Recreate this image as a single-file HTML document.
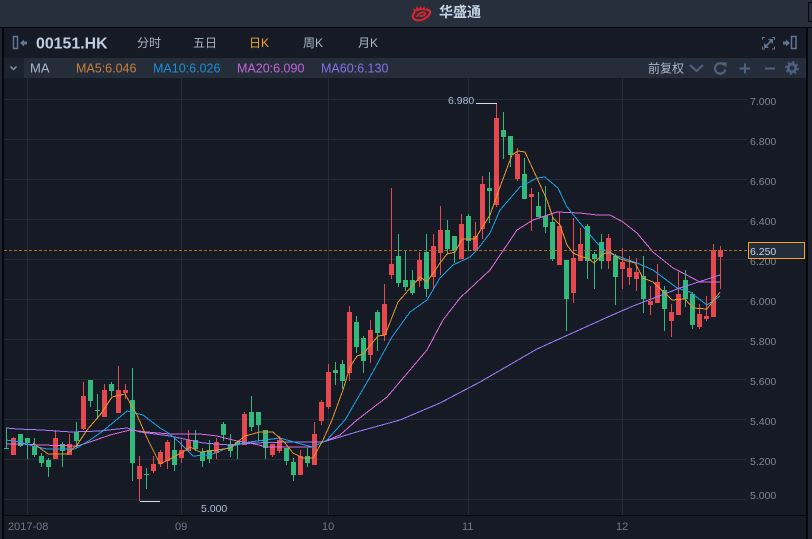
<!DOCTYPE html>
<html><head><meta charset="utf-8"><style>
html,body{margin:0;padding:0;background:#161a25;width:812px;height:539px;overflow:hidden}
svg{display:block}
text{font-family:"Liberation Sans","Noto Sans CJK SC",sans-serif}
.ax{font-size:10.5px;fill:#7d8797}
.tab{font-size:12px;fill:#a9b6c8}
.ma{font-size:12.5px}
.dt{font-size:11px;fill:#6f7785}
.ln{fill:none;stroke-width:1;shape-rendering:crispEdges}
</style></head><body>
<svg width="812" height="539" viewBox="0 0 812 539" xmlns="http://www.w3.org/2000/svg">
<rect width="812" height="539" fill="#161a25"/>
<rect width="812" height="27" fill="#272f3d"/>
<rect y="27" width="812" height="1" fill="#05070a"/>
<rect x="0" y="28" width="2" height="511" fill="#1c2330"/>
<rect x="2" y="28" width="2" height="511" fill="#05070a"/>
<rect x="806" y="28" width="2" height="511" fill="#05070a"/>
<rect x="808" y="28" width="4" height="511" fill="#1c2330"/>
<rect x="808.5" y="2.5" width="5" height="19" fill="none" stroke="#05070a"/>
<rect x="4" y="58" width="20" height="20" fill="#1b2230"/>
<rect x="24" y="58" width="782" height="20" fill="#252d3b"/>

<g fill="none" stroke="#d9252a" stroke-width="2.200">
<path d="M415 12C412 15 412 19 416 20C421 21.500 428 18 430 13C430.500 11 429 10 427 10"/>
<path d="M417 17C418 13 423 11.500 425 13C426 15 422 17 419.500 15.500" stroke-width="1.800"/>
</g>
<path d="M414 12L413 8L416 10L416.500 6L419 9L420.500 5.500L422 9L424.500 6L425 9.500L428 7.500L427.500 11L421 10Z" fill="#d9252a"/>
<text x="439" y="17" font-size="14" font-weight="bold" fill="#c3d3e6">华盛通</text>

<rect x="13.500" y="36.500" width="4" height="12" fill="none" stroke="#5f7596" stroke-width="1.500"/>
<path d="M20 43L24 39.500V41.500H27V44.500H24V46.500Z" fill="#5f7596"/>
<text x="36" y="48.500" font-size="15.900" font-weight="bold" fill="#bccde4">00151.HK</text>
<text x="137" y="47" class="tab">分时</text>
<text x="193" y="47" class="tab">五日</text>
<text x="249" y="47" class="tab" style="fill:#f5a623">日K</text>
<text x="303" y="47" class="tab">周K</text>
<text x="358" y="47" class="tab">月K</text>
<g fill="none" stroke="#5f7596" stroke-width="1">
<path d="M762.500 40V37.500H765M772 37.500H774.500V40M774.500 46.500V49H772M765 49H762.500V46.500"/>
<path d="M766 46L771.500 40.500" stroke-width="1.600"/>
</g>
<path d="M773 39V44L768 39ZM764 48V43L769 48Z" fill="#5f7596"/>
<rect x="791.500" y="36.500" width="4.500" height="12" fill="none" stroke="#5f7596" stroke-width="1.500"/>
<path d="M790 43L786 39.500V41.500H783V44.500H786V46.500Z" fill="#5f7596"/>

<path d="M10.500 66.500L13.500 69.500L16.500 66.500" fill="none" stroke="#8a95a5" stroke-width="1.500"/>
<text x="30" y="72.500" font-size="13" fill="#a9b6c8">MA</text>
<text x="76" y="72.500" class="ma" fill="#c8803a">MA5:6.046</text>
<text x="153" y="72.500" class="ma" fill="#1b8fd0">MA10:6.026</text>
<text x="237" y="72.500" class="ma" fill="#c565d8">MA20:6.090</text>
<text x="321" y="72.500" class="ma" fill="#7f74e8">MA60:6.130</text>
<text x="648" y="72.500" class="tab">前复权</text>
<path d="M690 65L696.500 71L703 65" fill="none" stroke="#4f6180" stroke-width="2"/>
<path d="M724.500 65.500A5.200 5.200 0 1 0 725.300 69.500" fill="none" stroke="#4f6180" stroke-width="2.200"/>
<path d="M722 62.500L726.500 62.500L726.500 67.500Z" fill="#4f6180"/>
<path d="M739.500 68.500H750M745 63.500V73.500" stroke="#4f6180" stroke-width="2" fill="none"/>
<path d="M765 68.500H775" stroke="#4f6180" stroke-width="2" fill="none"/>
<circle cx="792" cy="68" r="3.800" fill="none" stroke="#4f6180" stroke-width="2.800"/>
<circle cx="792" cy="68" r="6" fill="none" stroke="#4f6180" stroke-width="1.500" stroke-dasharray="2.300 2.400"/>

<g stroke="#262b38" stroke-width="1" shape-rendering="crispEdges" fill="none">
<path d="M4 99.500H747M4 139.500H747M4 179.500H747M4 219.500H747M4 259.500H747M4 299.500H747M4 339.500H747M4 379.500H747M4 419.500H747M4 459.500H747M4 499.500H747"/>
<path d="M27.500 78V515M181.500 78V515M328.500 78V515M468.500 78V515M622.500 78V515"/>
</g>
<rect x="4" y="515" width="802" height="1" fill="#05070a"/>

<g shape-rendering="crispEdges" fill="none">
<path stroke="#e5484f" stroke-width="1" d="M13.500 437V455M55.500 430V459M69.500 434V455M83.500 382V430M104.500 384V417M118.500 366V413M125.500 384V399M139.500 456V501M153.500 456V473M160.500 450V467M167.500 440V469M181.500 440V463M188.500 430V451M216.500 438V459M244.500 412V445M272.500 444V457M279.500 436V453M300.500 450V475M314.500 422V465M321.500 400V425M328.500 364V409M349.500 306V381M370.500 320V363M384.500 284V341M391.500 188V279M419.500 252V287M433.500 234V289M440.500 206V275M461.500 214V259M475.500 222V251M482.500 176V239M496.500 103V207M517.500 148V181M531.500 188V231M559.500 212V265M573.500 218V303M580.500 228V261M608.500 234V269M622.500 248V289M629.500 256V285M636.500 258V291M650.500 286V315M657.500 264V303M671.500 304V337M678.500 272V315M699.500 304V329M706.500 296V321M713.500 244V317M720.500 246V289"/>
<path stroke="#33b97c" stroke-width="1" d="M6.500 428V448M4 448.500H9M20.500 434V447M27.500 438V459M34.500 438V457M41.500 453V467M48.500 458V477M62.500 442V467M76.500 422V448M90.500 380V407M97.500 394V419M95 410.500H100M111.500 382V396M132.500 368V481M146.500 468V489M144 474.500H149M174.500 438V471M195.500 430V451M202.500 448V467M209.500 440V463M223.500 422V441M230.500 434V457M237.500 442V459M251.500 396V431M258.500 412V441M265.500 430V459M286.500 448V465M293.500 458V481M307.500 448V467M335.500 362V385M342.500 360V389M356.500 316V353M363.500 336V373M377.500 310V351M398.500 234V287M405.500 250V291M412.500 270V295M426.500 234V297M447.500 220V254M454.500 236V263M468.500 214V251M489.500 172V223M503.500 112V159M510.500 136V167M524.500 158V199M538.500 192V217M545.500 186V233M552.500 216V261M566.500 260V331M587.500 224V279M594.500 252V289M601.500 234V269M615.500 254V305M643.500 256V313M664.500 286V331M685.500 270V307M692.500 292V329"/>
<path stroke="#e5484f" stroke-width="5" d="M13.500 438V455M55.500 438V459M69.500 444V455M83.500 396V429M104.500 390V417M118.500 390V413M125.500 390V393M139.500 466V479M153.500 464V471M160.500 452V464M167.500 442V461M181.500 450V458M188.500 440V451M216.500 442V453M244.500 414V445M272.500 444V455M279.500 440V451M300.500 456V475M314.500 434V465M321.500 402V421M328.500 372V407M349.500 312V373M370.500 330V355M384.500 304V335M391.500 264V275M419.500 260V281M433.500 246V277M440.500 230V253M461.500 224V259M475.500 236V251M482.500 184V229M496.500 118V205M517.500 154V179M531.500 194V197M559.500 226V265M573.500 258V293M580.500 244V261M608.500 238V261M622.500 262V269M629.500 268V277M636.500 272V279M650.500 301V305M657.500 282V303M671.500 312V321M678.500 294V315M699.500 314V327M706.500 316V319M713.500 250V317M720.500 250V257"/>
<path stroke="#33b97c" stroke-width="5" d="M20.500 434V446M27.500 438V443M34.500 446V455M41.500 456V463M48.500 460V467M62.500 444V451M76.500 432V441M90.500 380V401M111.500 384V391M132.500 400V463M174.500 450V465M195.500 440V449M202.500 452V461M209.500 450V459M223.500 424V435M230.500 444V451M237.500 442V445M251.500 412V427M258.500 412V425M265.500 430V448M286.500 448V461M293.500 462V475M307.500 456V463M335.500 370V373M342.500 364V381M356.500 322V347M363.500 338V361M377.500 312V333M398.500 256V283M405.500 280V287M412.500 280V293M426.500 252V289M447.500 230V249M454.500 236V251M468.500 216V241M489.500 188V191M503.500 130V137M510.500 136V155M524.500 174V199M538.500 206V217M545.500 216V227M552.500 222V259M566.500 260V299M587.500 226V261M594.500 254V259M601.500 242V261M615.500 256V277M643.500 276V299M664.500 290V309M685.500 280V299M692.500 294V325"/>

<polyline class="ln" stroke="#a67bff" points="6,428 17,429 42,430 71,432 100,431 127,428 140,432 170,436 203,443 230,445 253,443 287,442 323,442 340,437 360,431 400,420 440,403 480,382 537,349 610,316 633,306 680,288 720,275"/>
<polyline class="ln" stroke="#e06be0" points="6,444 20,444 40,445 77,446 90,442 110,435 130,430 147,432 170,434 200,434 217,436 237,441 250,443 267,447 287,447 313,447 323,442 340,435 357,420 387,397 427,350 443,320 460,298 490,270 517,230 533,220 557,212 580,213 597,215 610,215 623,222 637,233 653,252 673,268 700,282 720,282"/>
<polyline class="ln" stroke="#1aa3e8" points="6,440 20,442 33,446 47,449 75,449 90,440 103,431 127,411 143,415 160,428 170,434 180,443 193,456 210,455 230,447 243,443 257,441 280,438 287,440 297,443 313,447 327,440 345,420 370,377 392,337 410,312 427,300 440,278 453,265 470,257 477,250 490,233 500,210 520,187 537,178 545,177 558,188 567,207 580,223 597,243 608,253 623,258 637,263 653,270 677,288 690,292 707,305 720,296"/>
<polyline class="ln" stroke="#e8962a" points="33,443 48,454 67,454 77,445 87,430 100,415 112,397 125,394 137,415 147,438 160,464 170,459 183,452 190,447 200,452 217,450 230,448 245,436 260,432 273,432 285,443 293,453 303,458 313,458 323,440 332,420 343,390 350,367 357,356 363,354 378,336 385,335 398,302 420,277 427,282 440,263 447,254 455,252 462,239 475,239 490,215 500,187 512,155 518,151 525,152 537,178 547,200 553,218 560,225 567,245 573,253 582,257 588,258 594,263 603,254 610,252 620,259 635,263 643,278 653,282 667,295 672,300 685,299 693,308 707,309 720,292"/>

<path d="M4 250.500H748" stroke="#a5701c" stroke-width="1" stroke-dasharray="3 2" fill="none" shape-rendering="crispEdges"/>
<path d="M476 103.500H497M140 501.500H160" stroke="#d8dce4" stroke-width="1" fill="none" shape-rendering="crispEdges"/>
<text x="448" y="104" class="ax" style="fill:#a9bcd6">6.980</text>
<text x="201" y="512" class="ax" style="fill:#a9bcd6">5.000</text>

<text x="750" y="105" class="ax">7.000</text>
<text x="750" y="145" class="ax">6.800</text>
<text x="750" y="185" class="ax">6.600</text>
<text x="750" y="225" class="ax">6.400</text>
<text x="750" y="265" class="ax">6.200</text>
<text x="750" y="305" class="ax">6.000</text>
<text x="750" y="345" class="ax">5.800</text>
<text x="750" y="385" class="ax">5.600</text>
<text x="750" y="425" class="ax">5.400</text>
<text x="750" y="465" class="ax">5.200</text>
<text x="750" y="499" class="ax">5.000</text>
<rect x="748.500" y="242.500" width="56" height="16" fill="#252d3b" stroke="#f5a623"/>
<text x="750" y="255" class="ax" style="fill:#c3d3e6">6.250</text>

<text x="8" y="530" class="dt">2017-08</text>
<text x="175" y="530" class="dt">09</text>
<text x="322" y="530" class="dt">10</text>
<text x="462" y="530" class="dt">11</text>
<text x="616" y="530" class="dt">12</text>
</svg>
</body></html>
